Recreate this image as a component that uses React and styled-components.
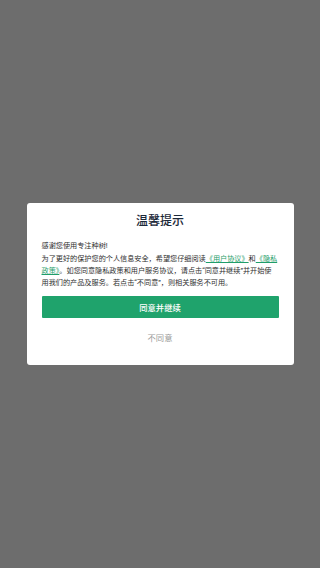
import React from 'react';
import styled, { createGlobalStyle } from 'styled-components';

const GlobalStyle = createGlobalStyle`
  html, body {
    margin: 0;
    padding: 0;
    height: 100%;
  }
  body {
    font-family: Roboto, "Noto Sans CJK SC", sans-serif;
    background: #6d6d6d;
  }
  #root {
    height: 100%;
  }
`;

const Overlay = styled.div`
  height: 100%;
  display: flex;
  align-items: center;
  justify-content: center;
`;

const Dialog = styled.div`
  width: 267px;
  box-sizing: border-box;
  background: #ffffff;
  border-radius: 3px;
  padding: 10px 15px 20px 15px;
  display: flex;
  flex-direction: column;
`;

const Title = styled.h2`
  margin: 0;
  text-align: center;
  font-size: 12px;
  line-height: 17px;
  font-weight: 500;
  color: #1b2838;
`;

const Body = styled.div`
  margin-top: 10px;
  font-size: 7.15px;
  line-height: 12.3px;
  color: #2e2e2e;

  p {
    margin: 0;
  }
`;

const Link = styled.a`
  color: #1f9e6a;
  text-decoration: underline;
  text-underline-offset: 1px;
`;

const AgreeButton = styled.button`
  margin-top: 6px;
  height: 22px;
  border: none;
  border-radius: 1px;
  background: #1fa36c;
  color: #ffffff;
  font-family: inherit;
  font-size: 8.3px;
  font-weight: 500;
  padding: 0;
`;

const RefuseButton = styled.button`
  margin-top: 11px;
  height: 16px;
  border: none;
  background: transparent;
  color: #9a9a9a;
  font-family: inherit;
  font-size: 8.3px;
  padding: 0;
`;

export default function App() {
  return (
    <>
      <GlobalStyle />
      <Overlay>
        <Dialog>
          <Title>温馨提示</Title>
          <Body>
            <p>感谢您使用专注种树!</p>
            <p>
              为了更好的保护您的个人信息安全，希望您仔细阅读<Link>《用户协议》</Link>和
              <Link>《隐私政策》</Link>。如您同意隐私政策和用户服务协议，请点击“同意并继续”并开始使用我们的产品及服务。若点击“不同意”，则相关服务不可用。
            </p>
          </Body>
          <AgreeButton>同意并继续</AgreeButton>
          <RefuseButton>不同意</RefuseButton>
        </Dialog>
      </Overlay>
    </>
  );
}
